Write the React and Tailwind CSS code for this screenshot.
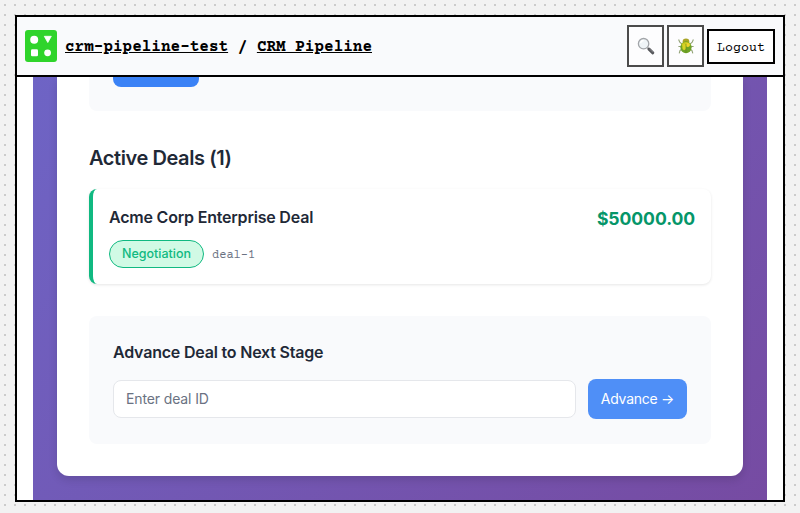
import React from "react";

function Logo() {
  return (
    <svg width="32" height="32" viewBox="0 0 32 32" className="shrink-0">
      <rect width="32" height="32" rx="3" fill="#2fd42b" />
      <circle cx="9.2" cy="9.7" r="4" fill="#fff" />
      <path d="M19.3 6.3h7L22.8 12.5z" fill="#fff" stroke="#fff" strokeWidth="0.8" strokeLinejoin="round" />
      <rect x="6" y="19.2" width="7" height="7" rx="1.3" fill="#fff" />
      <circle cx="22.6" cy="22.8" r="3.4" fill="#fff" />
    </svg>
  );
}

function Magnifier() {
  return (
    <svg width="18" height="18" viewBox="0 0 18 18">
      <path d="M10.6 10.8l1.8 1.8" stroke="#8b8d90" strokeWidth="1.6" />
      <path d="M12 12.2l3.8 3.6" stroke="#55565a" strokeWidth="3" strokeLinecap="round" />
      <path d="M12.6 12.1l3.3 3" stroke="#8a8b8f" strokeWidth="0.8" strokeLinecap="round" />
      <circle cx="6.6" cy="6.7" r="5.2" fill="#eff4f7" stroke="#a2a5a9" strokeWidth="1.3" />
      <path d="M3.6 6.2a3.2 3.2 0 0 1 3-2.7" stroke="#fff" strokeWidth="1.3" fill="none" />
    </svg>
  );
}

function Beetle() {
  return (
    <svg width="18" height="18" viewBox="0 0 18 18">
      <g stroke="#92a276" strokeWidth="1.1" fill="none">
        <path d="M5 7.2L2.8 5.2 1.6 2.6M13 7.2l2.2-2 1.2-2.6" />
        <path d="M4.4 9.5H1.4M13.6 9.5h3" />
        <path d="M5 12l-2 1.6-.8 2.8M13 12l2 1.6.8 2.8" />
      </g>
      <ellipse cx="9" cy="4.2" rx="3.3" ry="2.6" fill="#a9a528" />
      <ellipse cx="9" cy="10.2" rx="5.6" ry="6" fill="#6fa325" />
      <path d="M4.5 8C5 5.800 7 5 9 5s4 .8 4.500 3c-1.200 1.500-2.400 1.600-4.500 1.600S5.700 9.500 4.500 8z" fill="#c8c720" />
      <ellipse cx="7.200" cy="10" rx="1.900" ry="3" fill="#d6d425" />
      <ellipse cx="10.800" cy="8" rx="1.800" ry="2" fill="#efd32c" />
      <path d="M9 7v9" stroke="#60861f" strokeWidth="0.600" />
    </svg>
  );
}

function ToolButton({ label, children }) {
  return (
    <button
      aria-label={label}
      className="flex h-[42px] w-[37px] items-center justify-center border-2 border-[#4b4b4b] bg-[#fdfdfe]"
    >
      {children}
    </button>
  );
}

function Header() {
  return (
    <header className="flex h-[60px] shrink-0 items-center border-b-2 border-black bg-[#f9fafc] pr-2 pl-2 font-['Courier_Prime','Courier_New','Liberation_Mono',monospace] text-black">
      <Logo />
      <h1 className="ml-2 pt-0.5 text-base font-bold whitespace-pre">
        <a className="underline">crm-pipeline-test</a> / <a className="underline">CRM Pipeline</a>
      </h1>
      <div className="ml-auto flex items-center gap-[3px]">
        <ToolButton label="Search">
          <Magnifier />
        </ToolButton>
        <ToolButton label="Debug">
          <Beetle />
        </ToolButton>
        <button className="h-[35px] w-[68px] border-2 border-black bg-white pt-[5px] text-[13.333px]">
          Logout
        </button>
      </div>
    </header>
  );
}

function DealCard() {
  return (
    <article className="mt-4 flex h-[95px] justify-between rounded-lg border-l-4 border-[#10b981] bg-white px-4 pt-4 shadow-[0_1px_3px_rgba(0,0,0,0.1)]">
      <div>
        <h3 className="text-base leading-6 font-semibold tracking-[-0.2px]">Acme Corp Enterprise Deal</h3>
        <div className="mt-[11px] flex items-center gap-2">
          <span className="flex h-7 w-[95px] items-center justify-center rounded-full border border-[#10b981] bg-[#d1fae5] text-[12.5px] font-medium text-[#10b981]">
            Negotiation
          </span>
          <span className="pt-[3px] font-['Courier_Prime','Courier_New','Liberation_Mono',monospace] text-xs text-gray-500">
            deal-1
          </span>
        </div>
      </div>
      <span className="text-[17.6px] leading-7 font-bold tracking-[-0.08px] text-[#059669]">$50000.00</span>
    </article>
  );
}

export default function App() {
  return (
    <div className="h-[513px] w-[800px] overflow-hidden bg-[#f2f2f2] bg-[conic-gradient(from_90deg_at_8px_8px,#cbcbcb_90deg,transparent_0)] [background-size:10px_10px] [background-position:-4px_-4px] px-[15px] pt-[15px] font-['Inter',sans-serif] text-[#1f2937]">
      <div className="flex h-[487px] flex-col border-2 border-black bg-white">
        <Header />
        <main className="mx-4 h-[423px] overflow-hidden bg-[linear-gradient(135deg,#6e64c5,#764ba2)] px-6">
          <div className="h-[399px] rounded-b-xl bg-white px-8 shadow-[0_4px_8px_rgba(0,0,0,0.12)]">
            <div className="h-[34px] rounded-b-lg bg-[#f9fafc] px-6">
              <div className="h-[10px] w-[86px] rounded-b-lg bg-[#3b82f6]" />
            </div>
            <h2 className="mt-8 text-xl leading-[30px] font-semibold tracking-[-0.42px]">Active Deals (1)</h2>
            <DealCard />
            <section className="mt-8 h-[128px] rounded-lg bg-[#f9fafc] px-6 pt-6">
              <h3 className="text-base leading-6 font-semibold tracking-[-0.2px]">Advance Deal to Next Stage</h3>
              <div className="mt-[15px] flex items-center gap-3">
                <input
                  placeholder="Enter deal ID"
                  className="h-[38px] w-[463px] rounded-lg border border-gray-200 bg-white px-3 pb-0.5 text-sm tracking-[-0.13px] placeholder:text-gray-500"
                />
                <button className="h-10 w-[99px] rounded-lg bg-[#4f8ff7] text-sm tracking-[-0.25px] whitespace-nowrap text-white">
                  Advance →
                </button>
              </div>
            </section>
          </div>
        </main>
      </div>
    </div>
  );
}
